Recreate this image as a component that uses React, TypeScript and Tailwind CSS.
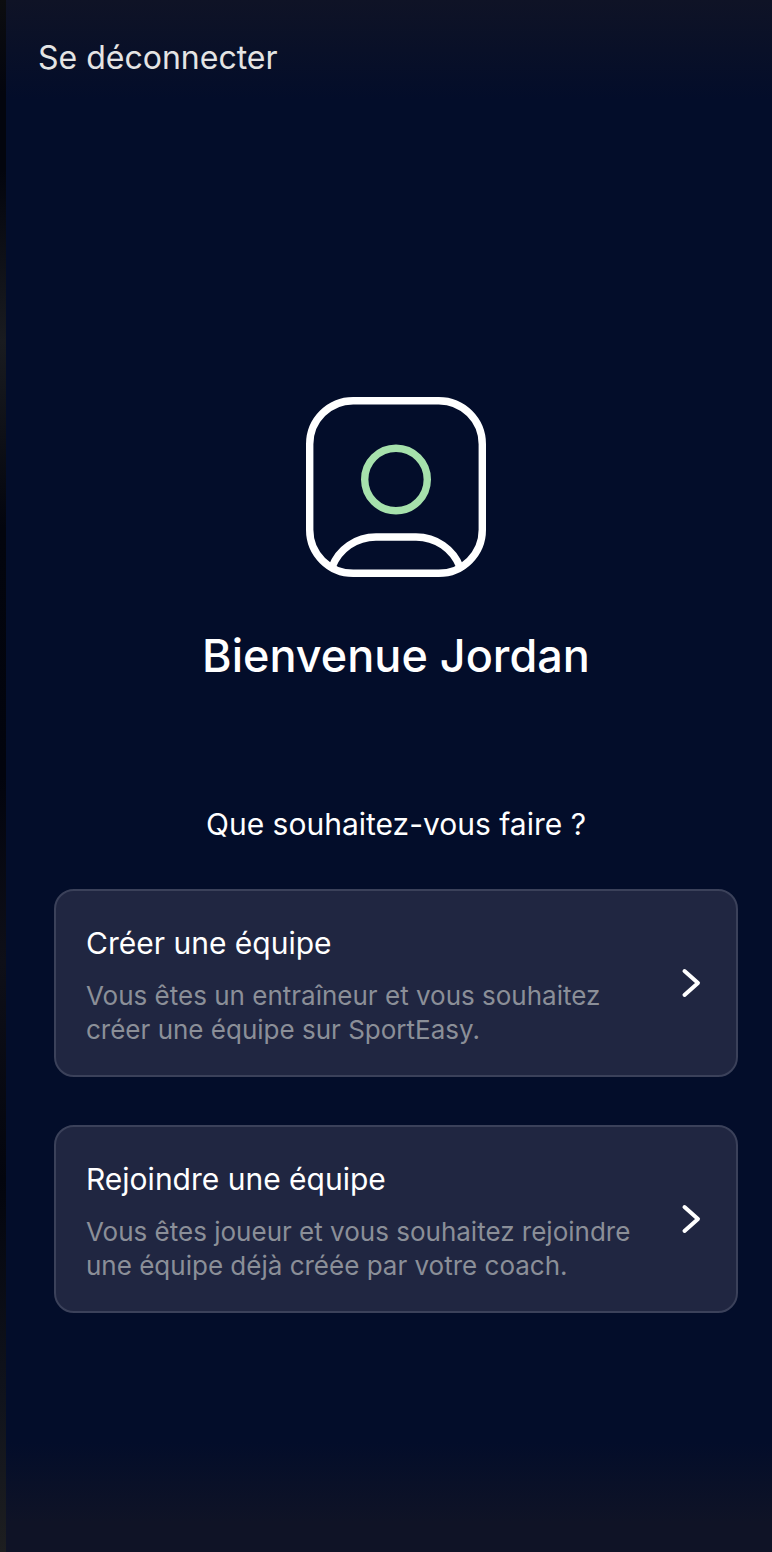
const choices = [
  {
    title: 'Créer une équipe',
    description: 'Vous êtes un entraîneur et vous souhaitez créer une équipe sur SportEasy.',
  },
  {
    title: 'Rejoindre une équipe',
    description: 'Vous êtes joueur et vous souhaitez rejoindre une équipe déjà créée par votre coach.',
  },
]

function ProfileIcon() {
  return (
    <svg viewBox="0 0 180 180" fill="none" strokeWidth="7.4" className="size-[180px]" aria-hidden="true">
      <rect x="3.7" y="3.7" width="172.6" height="172.6" rx="43.5" stroke="white" />
      <circle cx="90" cy="82.5" r="31.3" stroke="#a6e1ac" />
      <path d="M26 170 C33 152 50 140 70 140 H110 C130 140 147 152 154 170" stroke="white" />
    </svg>
  )
}

function Chevron() {
  return (
    <svg
      viewBox="0 0 20 30"
      fill="none"
      stroke="white"
      strokeWidth="4"
      strokeLinecap="round"
      strokeLinejoin="round"
      className="h-[30px] w-5 shrink-0"
      aria-hidden="true"
    >
      <path d="M3.5 3 L17 15 L3.5 27" />
    </svg>
  )
}

export default function App() {
  return (
    <div className="flex min-h-screen bg-[#030d2a] font-['Inter','Liberation_Sans',sans-serif] text-white">
      {/* Phone edge */}
      <div className="w-1.5 shrink-0 bg-linear-[180deg,#0c0d10_0%,#03050e_6%,#03050e_11%,#191b20_22%,#03050e_34%,#02040e_50%,#0e0f18_62%,#03050e_76%,#10131c_90%,#1d1e20_100%]" />

      <div className="flex flex-1 flex-col bg-linear-[180deg,#0f1326_0px,#030d2a_100px,#030d2a_calc(100%-110px),#0f1326_calc(100%-30px)]">
        <header className="px-8 pt-9">
          <button type="button" className="text-[32px] leading-[44px] text-[#e4e4e4]">
            Se déconnecter
          </button>
        </header>

        <main className="flex flex-col items-center pt-[317px] pr-[34px] pb-12 pl-12">
          <ProfileIcon />
          <h1 className="mt-[51px] text-[45px] leading-[56px] font-medium">Bienvenue Jordan</h1>
          <p className="mt-[120px] text-[30px] leading-10">Que souhaitez-vous faire ?</p>

          <div className="mt-[45px] flex w-full flex-col gap-12">
            {choices.map((choice) => (
              <button
                key={choice.title}
                type="button"
                className="flex w-full items-center justify-between rounded-[20px] border-2 border-[#3b415a] bg-[#202641] pr-[35px] pl-[30px] text-left"
              >
                <span className="max-w-[560px] pt-8 pb-7">
                  <span className="block text-[30px] leading-10">{choice.title}</span>
                  <span className="mt-4 block text-[26px] leading-[34px] text-[#8b8f98]">{choice.description}</span>
                </span>
                <Chevron />
              </button>
            ))}
          </div>
        </main>
      </div>
    </div>
  )
}
